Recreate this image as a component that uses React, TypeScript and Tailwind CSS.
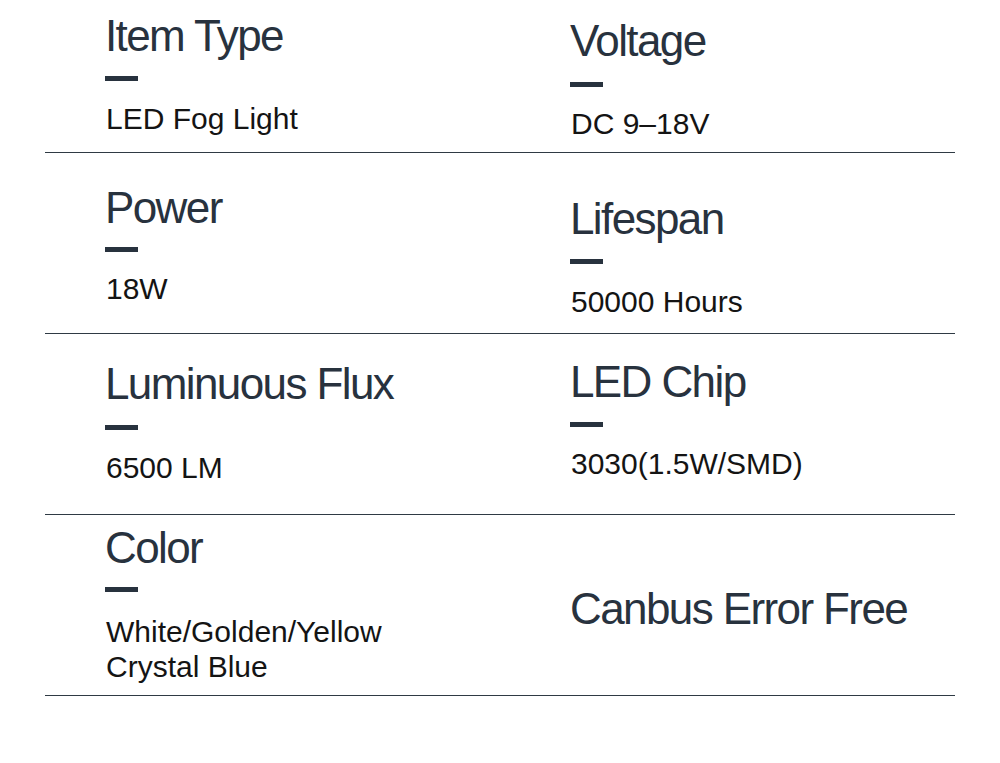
type Spec = {
  title: string
  lines?: string[]
  pt: string
  dashGap?: string
  valueGap?: string
}

const rows: { h: string; left: Spec; right: Spec }[] = [
  {
    h: 'h-[153px]',
    left: { title: 'Item Type', lines: ['LED Fog Light'], pt: 'pt-[14px]', dashGap: 'mt-[18px]', valueGap: 'mt-[20px]' },
    right: { title: 'Voltage', lines: ['DC 9–18V'], pt: 'pt-[19px]', dashGap: 'mt-[19px]', valueGap: 'mt-[19px]' },
  },
  {
    h: 'h-[181px]',
    left: { title: 'Power', lines: ['18W'], pt: 'pt-[33px]', dashGap: 'mt-[17px]', valueGap: 'mt-[19px]' },
    right: { title: 'Lifespan', lines: ['50000 Hours'], pt: 'pt-[44px]', dashGap: 'mt-[18px]', valueGap: 'mt-[20px]' },
  },
  {
    h: 'h-[181px]',
    left: { title: 'Luminuous Flux', lines: ['6500 LM'], pt: 'pt-[28px]', dashGap: 'mt-[19px]', valueGap: 'mt-[20px]' },
    right: { title: 'LED Chip', lines: ['3030(1.5W/SMD)'], pt: 'pt-[26px]', dashGap: 'mt-[18px]', valueGap: 'mt-[19px]' },
  },
  {
    h: 'h-[181px]',
    left: {
      title: 'Color',
      lines: ['White/Golden/Yellow', 'Crystal Blue'],
      pt: 'pt-[11px]',
      dashGap: 'mt-[17px]',
      valueGap: 'mt-[22px]',
    },
    right: { title: 'Canbus Error Free', pt: 'pt-[72px]' },
  },
]

function Cell({ spec }: { spec: Spec }) {
  return (
    <div className={`pl-[60px] ${spec.pt}`}>
      <div className="text-[44px] leading-[44px] tracking-[-1.6px] text-[#28323e] whitespace-nowrap">{spec.title}</div>
      {spec.lines && (
        <>
          <div className={`h-[5px] w-[33px] bg-[#28323e] ${spec.dashGap}`} />
          <div className={`pl-[1px] text-[30px] leading-[35px] text-[#141414] ${spec.valueGap}`}>
            {spec.lines.map((l) => (
              <div key={l} className="whitespace-nowrap">
                {l}
              </div>
            ))}
          </div>
        </>
      )}
    </div>
  )
}

export default function App() {
  return (
    <div className="h-[763px] w-[1000px] bg-white font-['Liberation_Sans',Arial,sans-serif]">
      <div className="mx-[45px] w-[910px]">
        {rows.map((r, i) => (
          <div key={i} className={`grid grid-cols-[465px_1fr] border-b border-[#2f3a44] ${r.h}`}>
            <Cell spec={r.left} />
            <Cell spec={r.right} />
          </div>
        ))}
      </div>
    </div>
  )
}
